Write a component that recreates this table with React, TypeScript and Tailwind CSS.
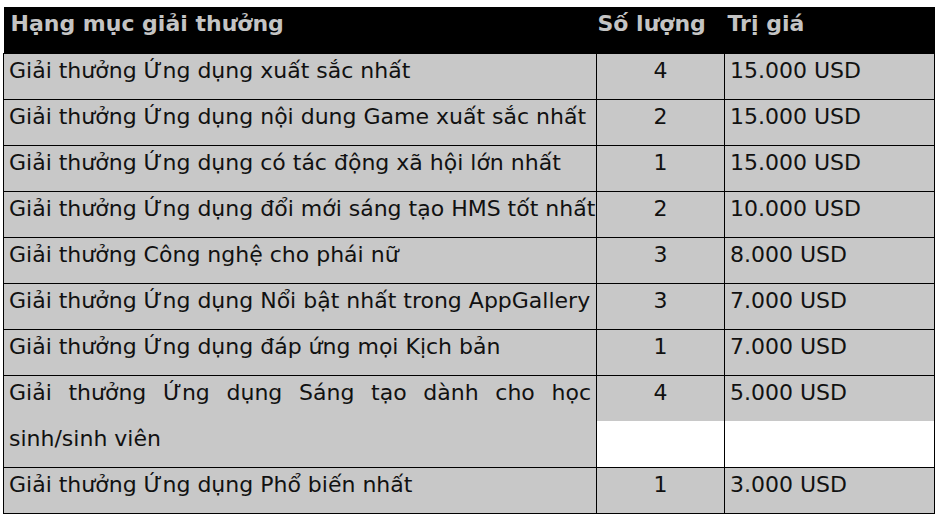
const rows: { name: string; qty: string; value: string }[] = [
  { name: "Giải thưởng Ứng dụng xuất sắc nhất", qty: "4", value: "15.000 USD" },
  { name: "Giải thưởng Ứng dụng nội dung Game xuất sắc nhất", qty: "2", value: "15.000 USD" },
  { name: "Giải thưởng Ứng dụng có tác động xã hội lớn nhất", qty: "1", value: "15.000 USD" },
  { name: "Giải thưởng Ứng dụng đổi mới sáng tạo HMS tốt nhất", qty: "2", value: "10.000 USD" },
  { name: "Giải thưởng Công nghệ cho phái nữ", qty: "3", value: "8.000 USD" },
  { name: "Giải thưởng Ứng dụng Nổi bật nhất trong AppGallery", qty: "3", value: "7.000 USD" },
  { name: "Giải thưởng Ứng dụng đáp ứng mọi Kịch bản", qty: "1", value: "7.000 USD" },
];

const font = { fontFamily: '"DejaVu Sans", Tahoma, sans-serif' };

function Row({ name, qty, value }: { name: string; qty: string; value: string }) {
  return (
    <tr className="h-[46px] bg-[#c8c8c8] align-top">
      <td className="whitespace-nowrap border border-black px-[5px] pt-[2px] leading-[30px]">{name}</td>
      <td className="border border-black pt-[2px] text-center leading-[30px]">{qty}</td>
      <td className="border border-black px-[5px] pt-[2px] leading-[30px]">{value}</td>
    </tr>
  );
}

export default function App() {
  return (
    <div className="h-[519px] w-[937px] bg-white pl-[3px] pt-[7px]" style={font}>
      <table className="w-[931px] table-fixed border-collapse text-[22px] text-[#111]">
        <colgroup>
          <col className="w-[593px]" />
          <col className="w-[128px]" />
          <col className="w-[210px]" />
        </colgroup>
        <thead>
          <tr className="h-[46px] bg-black align-top text-[22px] font-bold text-[#c4c4c4]">
            <th className="px-[7px] pt-[3px] text-left leading-[28px]">Hạng mục giải thưởng</th>
            <th className="whitespace-nowrap pl-[1px] pt-[3px] text-left leading-[28px]">Số lượng</th>
            <th className="px-[3px] pt-[3px] text-left leading-[28px]">Trị giá</th>
          </tr>
        </thead>
        <tbody>
          {rows.map((r) => (
            <Row key={r.name} {...r} />
          ))}
          <tr className="h-[92px] align-top">
            <td className="border border-black bg-[#c8c8c8] px-[5px] pt-[2px]">
              <div className="leading-[30px] [text-align-last:justify]">
                Giải thưởng Ứng dụng Sáng tạo dành cho học
              </div>
              <div className="pt-[16px] leading-[30px]">sinh/sinh viên</div>
            </td>
            <td className="border border-black p-0 text-center">
              <div className="h-[45px] bg-[#c8c8c8] pt-[2px] leading-[30px]">4</div>
            </td>
            <td className="border border-black p-0">
              <div className="h-[45px] bg-[#c8c8c8] px-[5px] pt-[2px] leading-[30px]">5.000 USD</div>
            </td>
          </tr>
          <Row name="Giải thưởng Ứng dụng Phổ biến nhất" qty="1" value="3.000 USD" />
        </tbody>
      </table>
    </div>
  );
}
